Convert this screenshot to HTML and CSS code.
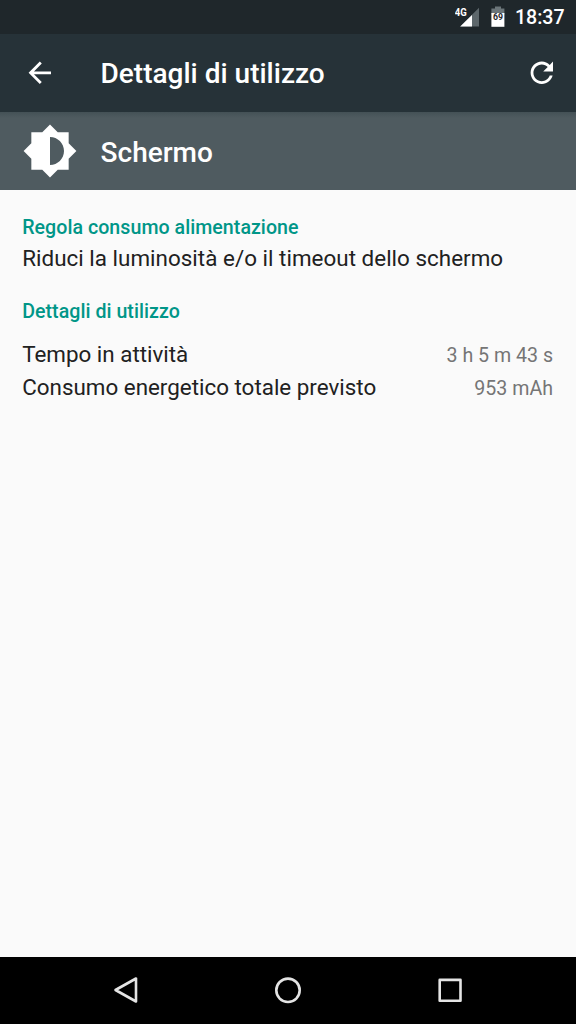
FILE: index.html
```html
<!DOCTYPE html>
<html lang="it">
<head>
<meta charset="utf-8">
<title>Dettagli di utilizzo</title>
<link rel="stylesheet" href="styles.css">
</head>
<body>
<div class="screen">
  <div class="status">
    <svg class="signal" width="25" height="21" viewBox="0 0 25 21">
      <path d="M24 1.8V20.6H5.2z" fill="#5d676b"/>
      <path d="M17 8.9V20.6H5.2z" fill="#fff"/>
      <text class="network" x="-.2" y="9.6" textLength="12" lengthAdjust="spacingAndGlyphs">4G</text>
    </svg>
    <svg class="battery" width="14" height="21" viewBox="0 0 14 21">
      <path d="M4 .4h6v2h3.4v6H.4v-6H4z" fill="#6b7579"/>
      <path d="M.4 7h13v13.8H.4z" fill="#fff"/>
      <text class="level" x="2" y="14" textLength="10" lengthAdjust="spacingAndGlyphs">69</text>
    </svg>
    <span class="clock">18:37</span>
  </div>
  <header class="appbar">
    <svg class="action" viewBox="0 0 24 24"><path d="M20 11H7.83l5.59-5.59L12 4l-8 8 8 8 1.41-1.41L7.83 13H20v-2z"/></svg>
    <h1 class="title">Dettagli di utilizzo</h1>
    <svg class="action" viewBox="0 0 24 24"><path d="M17.65 6.35C16.2 4.9 14.21 4 12 4c-4.42 0-7.99 3.58-7.99 8s3.57 8 7.99 8c3.73 0 6.84-2.55 7.73-6h-2.08c-.82 2.33-3.04 4-5.65 4-3.31 0-6-2.69-6-6s2.69-6 6-6c1.66 0 3.14.69 4.22 1.78L13 11h7V4l-2.35 2.35z"/></svg>
  </header>
  <section class="subject">
    <svg class="brightness" viewBox="0 0 24 24"><path fill-rule="evenodd" d="M20 15.31L23.31 12 20 8.69V4h-4.69L12 .69 8.69 4H4v4.69L.69 12 4 15.31V20h4.69L12 23.31 15.31 20H20v-4.69zM12 18V6c3.31 0 6 2.69 6 6s-2.69 6-6 6z"/></svg>
    <h2 class="title name">Schermo</h2>
  </section>
  <main class="content">
    <h3 class="heading advice">Regola consumo alimentazione</h3>
    <p class="text tip">Riduci la luminosità e/o il timeout dello schermo</p>
    <h3 class="heading usage">Dettagli di utilizzo</h3>
    <div class="row"><span class="text active">Tempo in attività</span><span class="value">3 h 5 m 43 s</span></div>
    <div class="row"><span class="text power">Consumo energetico totale previsto</span><span class="value">953 mAh</span></div>
  </main>
  <nav class="navbar">
    <svg width="28" height="28" viewBox="0 0 28 28"><path d="M24 2.5v23L3.5 14z"/></svg>
    <svg width="28" height="28" viewBox="0 0 28 28"><circle cx="14" cy="14.3" r="11.7"/></svg>
    <svg width="28" height="28" viewBox="0 0 28 28"><path d="M3.7 3.9h20.8v20.8H3.7z"/></svg>
  </nav>
</div>
</body>
</html>
```
FILE: styles.css
```css
* { box-sizing: border-box; }
body, h1, h2, h3, p { margin: 0; }
.screen {
  display: flex;
  flex-direction: column;
  width: 576px;
  height: 1024px;
  background: #fafafa;
  color: #212121;
  font-family: Roboto, "Liberation Sans", sans-serif;
}
svg { display: block; flex: none; }
.status {
  display: flex;
  align-items: flex-start;
  justify-content: flex-end;
  height: 34px;
  padding: 6px 11.4px 0 0;
  background: #1f272b;
  color: #fff;
}
.network { font-size: 10px; font-weight: 700; fill: #fff; }
.battery { margin: 0 9.6px 0 11px; }
.level { font-size: 9.5px; font-weight: 700; fill: #1f272b; }
.clock {
  font-size: 19.6px;
  font-weight: 500;
  line-height: 23px;
}
.appbar {
  display: flex;
  align-items: center;
  height: 78px;
  padding: 0 17px 0 22.6px;
  background: #263238;
}
.action { width: 33.6px; height: 33.6px; fill: #fff; }
.title {
  flex: 1;
  padding-top: 2px;
  margin-left: 44.4px;
  color: #fff;
  font-size: 28px;
  font-weight: 500;
  line-height: 34px;
}
.subject {
  display: flex;
  align-items: center;
  height: 78px;
  padding-left: 22px;
  background: linear-gradient(#445156, #4f5b60 6px);
}
.brightness { width: 56px; height: 56px; fill: #fff; }
.name { padding-top: 3px; margin-left: 22.6px; }
.content { flex: 1; padding: 25px 23px 0 22.2px; }
.heading {
  color: #009688;
  font-size: 19.6px;
  font-weight: 500;
  line-height: 26px;
  letter-spacing: 0.04px;
}
.text { font-size: 22.4px; line-height: 33px; }
.tip {
  padding-top: 1px;
  margin-bottom: 24px;
  letter-spacing: 0.03px;
}
.usage { margin-bottom: 13px; }
.row {
  display: flex;
  justify-content: space-between;
  height: 33px;
}
.value { color: #757575; font-size: 19.6px; line-height: 35px; }
.navbar {
  display: flex;
  align-items: center;
  justify-content: center;
  gap: 134px;
  height: 67px;
  padding-bottom: 1px;
  background: #000;
}
.navbar svg { fill: none; stroke: #e4e4e4; stroke-width: 2.6; stroke-linejoin: round; }
```
